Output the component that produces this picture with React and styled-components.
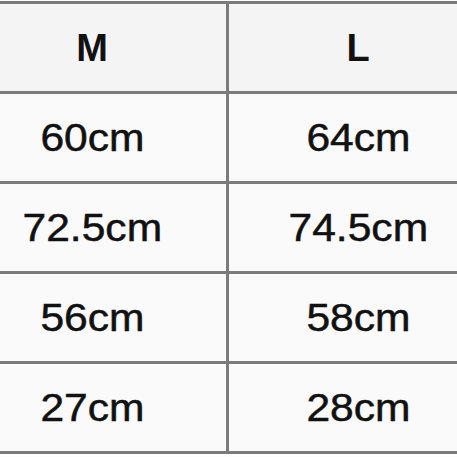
import React from 'react';
import styled, { createGlobalStyle } from 'styled-components';

const rows = [
  ['60cm', '64cm'],
  ['72.5cm', '74.5cm'],
  ['56cm', '58cm'],
  ['27cm', '28cm'],
];

const Global = createGlobalStyle`
  html, body {
    margin: 0;
    padding: 0;
    background: #fdfdfd;
  }
  body {
    font-family: 'Liberation Sans', Arial, Helvetica, sans-serif;
    color: #111;
  }
`;

const Table = styled.div`
  margin-top: 1px;
  width: 457px;
  display: grid;
  grid-template-columns: 226px 228px;
  grid-auto-rows: 87px;
  column-gap: 3px;
  row-gap: 3px;
  padding: 3px 0;
  background: #7b7b7b;
`;

const Cell = styled.div`
  display: flex;
  align-items: center;
  justify-content: center;
  background: ${(p) => (p.$head ? '#f4f4f4' : '#fafafa')};
  padding-right: ${(p) => (p.$left ? '42px' : '0')};
  padding-left: ${(p) => (p.$left ? '0' : '30px')};
`;

const Text = styled.span`
  font-size: 38px;
  font-weight: ${(p) => (p.$head ? 700 : 400)};
  -webkit-text-stroke: ${(p) => (p.$head ? '0' : '0.5px')};
  display: inline-block;
  transform: scaleX(${(p) => (p.$head ? 1 : 1.12)});
  line-height: 1;
`;

export default function App() {
  return (
    <>
      <Global />
      <Table>
        <Cell $head $left><Text $head>M</Text></Cell>
        <Cell $head><Text $head>L</Text></Cell>
        {rows.map(([m, l]) => (
          <React.Fragment key={m}>
            <Cell $left><Text>{m}</Text></Cell>
            <Cell><Text>{l}</Text></Cell>
          </React.Fragment>
        ))}
      </Table>
    </>
  );
}
